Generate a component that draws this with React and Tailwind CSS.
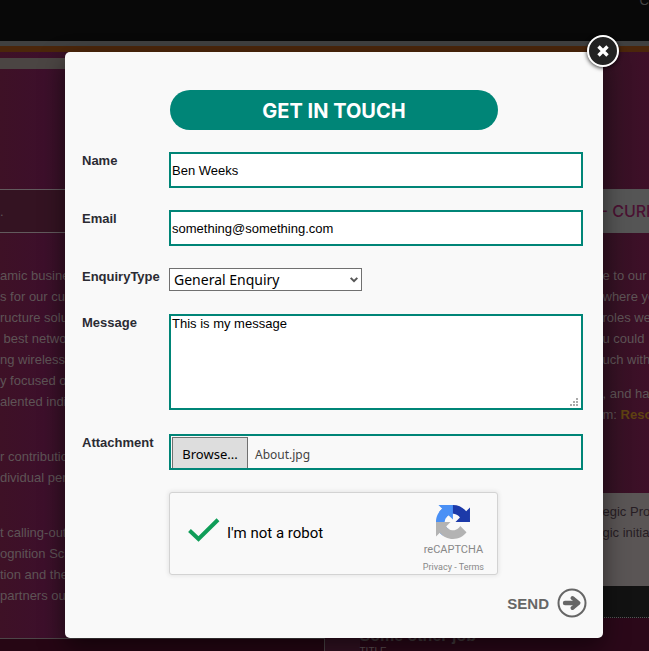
import React, { useState } from 'react';

const introParagraphs = [
  [
    'amic business',
    's for our customers',
    'ructure solutions',
    ' best network',
    'ng wireless and',
    'y focused on',
    'alented individuals'
  ],
  ['r contribution', 'dividual performance'],
  ['t calling-out', 'ognition Scheme', 'tion and the', 'partners out']
];

const careerLines = ['e to our', 'where you', 'roles we', 'u could', 'uch with'];

const fieldClass =
  'h-9 w-full border-2 border-[#008577] bg-white px-px text-[13px] text-black outline-none';

const RecaptchaLogo = () => (
  <svg viewBox="0 0 64 64" className="h-[34px] w-[34px]" aria-hidden="true">
    <path
      fill="#1c3aa9"
      d="M64 31.955l-.033-1.37V4.687l-7.16 7.16C50.948 4.674 42.033.093 32.05.093c-10.4 0-19.622 4.96-25.458 12.64l11.736 11.86a15.55 15.55 0 0 1 4.754-5.334c2.05-1.6 4.952-2.906 8.968-2.906.485 0 .86.057 1.135.163 4.976.393 9.288 3.14 11.828 7.124l-8.307 8.307L64 31.953"
    />
    <path
      fill="#4a90f5"
      d="M31.862.094l-1.37.033H4.594l7.16 7.16C4.58 13.147 0 22.06 0 32.046c0 10.4 4.96 19.622 12.64 25.458L24.5 45.768a15.55 15.55 0 0 1-5.334-4.754c-1.6-2.05-2.906-4.952-2.906-8.968 0-.485.057-.86.163-1.135.393-4.976 3.14-9.288 7.124-11.828l8.307 8.307L31.86.095"
    />
    <path
      fill="#b3b3b3"
      d="M.001 32.045l.033 1.37v25.898l7.16-7.16c5.86 7.173 14.774 11.754 24.76 11.754 10.4 0 19.622-4.96 25.458-12.64l-11.736-11.86a15.55 15.55 0 0 1-4.754 5.334c-2.05 1.6-4.952 2.906-8.968 2.906-.485 0-.86-.057-1.135-.163-4.976-.393-9.288-3.14-11.828-7.124l8.307-8.307-25.997.002"
    />
  </svg>
);

const SendIcon = () => (
  <svg viewBox="0 0 30 30" className="h-[30px] w-[30px]" fill="none" stroke="#666" aria-hidden="true">
    <circle cx="15" cy="15" r="13.5" strokeWidth="2" />
    <path d="M8 15H20" strokeWidth="4.4" strokeLinecap="round" />
    <path d="M15.5 10l6 5-6 5" strokeWidth="4" strokeLinecap="round" strokeLinejoin="round" />
  </svg>
);

const PageBackground = () => (
  <div className="min-h-screen bg-[linear-gradient(to_right,#3e1126,#3d0f2b_7%,#331223_12%,#331223_93%,#3f0f28)] text-[13px] leading-[21px] text-[#5e5456]">
    <header className="flex h-[41px] justify-end bg-[#080808] leading-[2px] text-[#444]">C</header>
    <div className="h-[5px] bg-[#404040]" />
    <div className="h-[6px] bg-[#4b260b]" />
    <div className="flex whitespace-nowrap">
      <div className="w-1/2 pt-[6px]">
        <div className="h-[11px] bg-[#4b4543]" />
        <div className="mt-[120px] flex h-11 items-center border-y border-[#625a5d] bg-[#341322]">.</div>
        <div className="flex flex-col gap-[34px] py-8">
          {introParagraphs.map((lines) => (
            <p key={lines[0]}>
              {lines.map((line) => (
                <span key={line} className="block whitespace-pre">{line}</span>
              ))}
            </p>
          ))}
        </div>
        <div className="h-10 border-t border-r border-[#4d4648] bg-[#260614]" />
      </div>

      <div className="w-1/2 overflow-hidden pl-[35px] pt-[137px]">
        <h2 className="flex h-11 items-center bg-[#555] pl-[241px] font-['Inter',sans-serif] text-base font-medium text-[#4a1132]">
          - CURRENT
        </h2>
        <div className="pl-[243px] pt-8">
          <p>
            {careerLines.map((line) => (
              <span key={line} className="block">{line}</span>
            ))}
          </p>
          <p className="pt-[13px]">
            <span className="block">, and have</span>
            <span className="block">
              m: <b className="text-[#5f4212]">Resourcing</b>
            </span>
          </p>
        </div>
        <div className="mt-[68px] h-[93px] bg-[#5a5555] pl-[243px] pt-2 text-[#271d24]">
          <p>egic Project</p>
          <p>gic initiative</p>
        </div>
        <div className="h-8 border-b border-dotted border-[#555] bg-[#121212]" />
        <div className="h-[34px] bg-[#2b0819] pt-[7px]">
          <h3 className="text-base font-bold leading-[21px] text-[#443c3f]">Some other job</h3>
          <p className="text-[10px] leading-3">TITLE</p>
        </div>
      </div>
    </div>
  </div>
);

const FormRow = ({ label, htmlFor, children }) => (
  <div className="grid grid-cols-[87px_1fr]">
    <label htmlFor={htmlFor} className="pt-px text-[13px] font-bold leading-4 text-[#2b2b33]">
      {label}
    </label>
    {children}
  </div>
);

const ContactModal = ({ onClose }) => {
  const [form, setForm] = useState({
    name: 'Ben Weeks',
    email: 'something@something.com',
    type: 'General Enquiry',
    message: 'This is my message'
  });
  const [fileName, setFileName] = useState('About.jpg');

  const handleChange = (e) => setForm({ ...form, [e.target.name]: e.target.value });

  return (
    <div className="absolute inset-0 pl-[65px] pr-[46px] pt-[52px]">
      <div
        role="dialog"
        aria-label="Get in touch"
        className="relative rounded-[5px] bg-[#f9f9f9] pb-5 pl-[17px] pr-5 pt-[38px] shadow-[0_10px_25px_rgba(0,0,0,0.5)]"
      >
        <button
          type="button"
          onClick={onClose}
          aria-label="Close"
          className="absolute -right-4 -top-[17px] flex h-8 w-8 items-center justify-center rounded-full border-2 border-white bg-[#222] shadow-[0_1px_4px_rgba(0,0,0,0.8)]"
        >
          <svg viewBox="0 0 12 12" className="h-3 w-3" stroke="#fff" strokeWidth="3.4" aria-hidden="true">
            <path d="M1.5 1.5l9 9M10.5 1.5l-9 9" />
          </svg>
        </button>

        <form className="flex flex-col gap-[22px]" onSubmit={(e) => e.preventDefault()}>
          <h1 className="ml-[88px] flex h-10 w-[328px] items-center justify-center rounded-[20px] bg-[#008577] pt-[2px] font-['Inter',sans-serif] text-xl font-bold text-white">
            GET IN TOUCH
          </h1>

          <FormRow label="Name" htmlFor="name">
            <input id="name" name="name" type="text" value={form.name} onChange={handleChange} className={fieldClass} />
          </FormRow>

          <FormRow label="Email" htmlFor="email">
            <input id="email" name="email" type="email" value={form.email} onChange={handleChange} className={fieldClass} />
          </FormRow>

          <FormRow label="EnquiryType" htmlFor="type">
            <div className="flex h-6 items-start">
              <div className="relative">
                <select
                  id="type"
                  name="type"
                  value={form.type}
                  onChange={handleChange}
                  className="block h-[23px] w-[193px] appearance-none border border-[#707070] bg-white pl-1 font-['Noto_Sans',sans-serif] text-sm leading-5 text-black outline-none"
                >
                  <option>General Enquiry</option>
                </select>
                <svg
                  viewBox="0 0 8 6"
                  className="pointer-events-none absolute right-1 top-[9px] h-[6px] w-2"
                  fill="none"
                  stroke="#555"
                  strokeWidth="2"
                  aria-hidden="true"
                >
                  <path d="M.7 .9L4 4.2 7.3 .9" />
                </svg>
              </div>
            </div>
          </FormRow>

          <FormRow label="Message" htmlFor="message">
            <div className="relative pb-[2px]">
              <textarea
                id="message"
                name="message"
                value={form.message}
                onChange={handleChange}
                className="block h-24 w-full resize-none border-2 border-[#008577] bg-white px-px text-[13px] leading-4 text-black outline-none"
              />
              <svg viewBox="0 0 8 8" className="absolute bottom-[6px] right-[5px] h-2 w-2" fill="#aaa" aria-hidden="true">
                <path d="M6 0h2v2H6zM3 3h2v2H3zM6 3h2v2H6zM0 6h2v2H0zM3 6h2v2H3zM6 6h2v2H6z" />
              </svg>
            </div>
          </FormRow>

          <FormRow label="Attachment" htmlFor="attachment">
            <div className="relative h-9 border-2 border-[#008577] pl-px pt-px font-['Noto_Sans',sans-serif] text-[13px]">
              <input
                id="attachment"
                type="file"
                className="peer sr-only"
                onChange={(e) => setFileName(e.target.files[0]?.name || '')}
              />
              <label htmlFor="attachment" className="flex h-full items-stretch">
                <span className="flex w-[76px] items-center justify-center border border-b-0 border-[#707070] bg-[#ddd] pt-1 text-black">
                  Browse...
                </span>
                <span className="flex items-center pl-[7px] pt-1 text-xs text-[#444]">{fileName}</span>
              </label>
            </div>
          </FormRow>

          <div className="flex flex-col gap-[13px]">
            <div className="ml-[87px] flex h-[83px] w-[329px] justify-between rounded-[3px] border border-[#d3d3d3] bg-[#f9f9f9] pl-[18px] pr-[13px] shadow-[0_0_4px_1px_rgba(0,0,0,0.08)]">
              <label className="flex items-center gap-[7px] font-['Roboto',sans-serif] text-[15px] text-black">
                <span className="relative -mt-2 block h-6 w-8">
                  <input type="checkbox" defaultChecked className="peer block h-6 w-8 appearance-none" />
                  <svg
                    viewBox="0 0 32 24"
                    className="pointer-events-none absolute inset-0 hidden h-6 w-8 peer-checked:block"
                    fill="none"
                    stroke="#0f9d58"
                    strokeWidth="4"
                    aria-hidden="true"
                  >
                    <path d="M1.5 12.5l9 8.5L30 1.8" />
                  </svg>
                </span>
                I'm not a robot
              </label>
              <div className="flex flex-col items-center pt-3 font-['Roboto',sans-serif] text-[#888]">
                <RecaptchaLogo />
                <span className="pt-1 text-[11px] leading-[14px]">reCAPTCHA</span>
                <span className="pt-1 text-[9px] leading-3">
                  <a href="#privacy">Privacy</a> - <a href="#terms">Terms</a>
                </span>
              </div>
            </div>

            <button
              type="submit"
              className="-mr-1 flex items-center gap-2 self-end text-[15px] font-bold leading-none text-[#666]"
            >
              SEND
              <SendIcon />
            </button>
          </div>
        </form>
      </div>
    </div>
  );
};

const App = () => {
  const [isOpen, setIsOpen] = useState(true);

  return (
    <div className="relative h-screen overflow-hidden font-['Liberation_Sans',Arial,sans-serif]">
      <PageBackground />
      {isOpen && <ContactModal onClose={() => setIsOpen(false)} />}
    </div>
  );
};

export default App;
